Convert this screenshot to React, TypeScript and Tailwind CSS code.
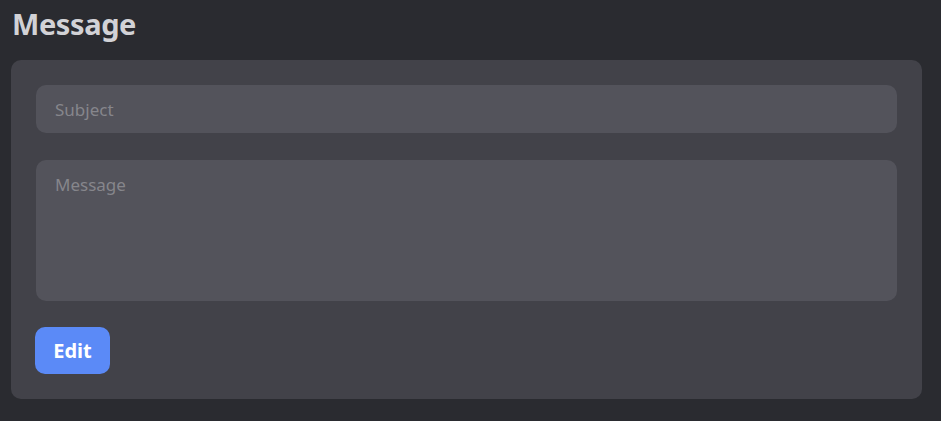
import { useState } from 'react';

export default function App() {
    const [subject, setSubject] = useState('');
    const [message, setMessage] = useState('');

    return (
        <div className="min-h-screen bg-[#2a2b30] pl-[11px] pr-[19px] pt-[4px] pb-[22px] font-['Noto_Sans',sans-serif]">
            <h1 className="text-[29px] leading-[40px] font-bold text-[#d2d2d6] pl-px tracking-[-0.4px]">Message</h1>

            <div className="mt-[16px] bg-[#424249] rounded-[10px] px-[25px] pt-[25px] pb-[25px] flex flex-col">
                <input
                    className="h-[48px] w-full rounded-[10px] bg-[#53535b] px-[19px] text-[17px] text-[#e4e4e7] placeholder:text-[#86868c] outline-none"
                    placeholder="Subject"
                    value={subject}
                    onChange={e => setSubject(e.target.value)}
                />
                <textarea
                    className="mt-[27px] h-[141px] w-full resize-none rounded-[10px] bg-[#53535b] px-[19px] py-[13px] text-[17px] leading-[24px] text-[#e4e4e7] placeholder:text-[#86868c] outline-none"
                    placeholder="Message"
                    value={message}
                    onChange={e => setMessage(e.target.value)}
                />
                <div className="mt-[26px]">
                    <button className="h-[47px] w-[75px] -ml-px rounded-[10px] bg-[#5b8af7] text-[20px] font-bold text-white">
                        Edit
                    </button>
                </div>
            </div>
        </div>
    );
}
